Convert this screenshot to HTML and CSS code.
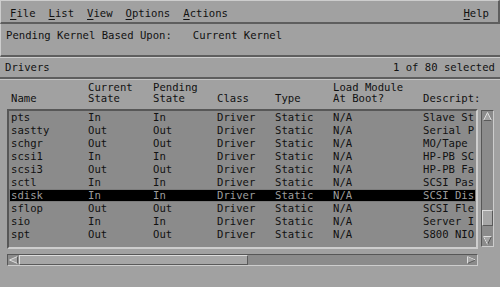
FILE: index.html
```html
<!DOCTYPE html>
<html lang="en">
<head>
  <meta charset="UTF-8">
  <title>Kernel Configuration: Drivers</title>
  <link rel="stylesheet" href="styles.css">
</head>
<body>
  <div class="window">
    <!-- Menu bar -->
    <div class="menubar">
      <span class="menu"><u>F</u>ile</span>
      <span class="menu"><u>L</u>ist</span>
      <span class="menu"><u>V</u>iew</span>
      <span class="menu"><u>O</u>ptions</span>
      <span class="menu"><u>A</u>ctions</span>
      <span class="menu help"><u>H</u>elp</span>
    </div>

    <!-- Kernel info -->
    <div class="kernel">
      <span>Pending Kernel Based Upon:</span><span class="kernel-value">Current Kernel</span>
    </div>

    <!-- List title -->
    <div class="titlebar">
      <span>Drivers</span>
      <span>1 of 80 selected</span>
    </div>

    <!-- Column headings -->
    <div class="heads cols">
      <span><br>Name</span>
      <span>Current<br>State</span>
      <span>Pending<br>State</span>
      <span><br>Class</span>
      <span><br>Type</span>
      <span>Load Module<br>At Boot?</span>
      <span><br>Descript:</span>
    </div>

    <div class="listarea">
      <div class="listbox">
        <div class="row cols"><span>pts</span><span>In</span><span>In</span><span>Driver</span><span>Static</span><span>N/A</span><span class="desc">Slave St</span></div>
        <div class="row cols"><span>sastty</span><span>Out</span><span>Out</span><span>Driver</span><span>Static</span><span>N/A</span><span class="desc">Serial P</span></div>
        <div class="row cols"><span>schgr</span><span>Out</span><span>Out</span><span>Driver</span><span>Static</span><span>N/A</span><span class="desc">MO/Tape</span></div>
        <div class="row cols"><span>scsi1</span><span>In</span><span>In</span><span>Driver</span><span>Static</span><span>N/A</span><span class="desc">HP-PB SC</span></div>
        <div class="row cols"><span>scsi3</span><span>Out</span><span>Out</span><span>Driver</span><span>Static</span><span>N/A</span><span class="desc">HP-PB Fa</span></div>
        <div class="row cols"><span>sctl</span><span>In</span><span>In</span><span>Driver</span><span>Static</span><span>N/A</span><span class="desc">SCSI Pas</span></div>
        <div class="row cols selected"><span>sdisk</span><span>In</span><span>In</span><span>Driver</span><span>Static</span><span>N/A</span><span class="desc">SCSI Dis</span></div>
        <div class="row cols"><span>sflop</span><span>Out</span><span>Out</span><span>Driver</span><span>Static</span><span>N/A</span><span class="desc">SCSI Fle</span></div>
        <div class="row cols"><span>sio</span><span>In</span><span>In</span><span>Driver</span><span>Static</span><span>N/A</span><span class="desc">Server I</span></div>
        <div class="row cols"><span>spt</span><span>Out</span><span>Out</span><span>Driver</span><span>Static</span><span>N/A</span><span class="desc">S800 NIO</span></div>
      </div>

      <!-- Vertical scrollbar -->
      <div class="vscroll">
        <svg class="arrow" width="11" height="11" viewBox="0 0 11 11">
          <polyline points="1.5,9.5 5.5,1.5 9.5,9.5" fill="#a3a3a3" stroke="#dedede"/>
          <line x1="1.5" y1="9.5" x2="9.5" y2="9.5" stroke="#5a5a5a"/>
        </svg>
        <div class="vthumb"></div>
        <svg class="arrow down" width="11" height="11" viewBox="0 0 11 11">
          <polygon points="1.5,1.5 9.5,1.5 5.5,9.5" fill="#a3a3a3" stroke="#5a5a5a"/>
          <polyline points="1.5,1.5 9.5,1.5" stroke="#dedede"/>
          <polyline points="1.5,1.5 5.5,9.5" stroke="#dedede"/>
        </svg>
      </div>
    </div>

    <!-- Horizontal scrollbar -->
    <div class="hscroll">
      <svg class="arrow" width="11" height="10" viewBox="0 0 11 10">
        <polygon points="9.5,1.5 9.5,8.5 1.5,5" fill="#a3a3a3" stroke="#dedede"/>
        <line x1="9.5" y1="1.5" x2="9.5" y2="8.5" stroke="#5a5a5a"/>
      </svg>
      <div class="hthumb"></div>
      <svg class="arrow right" width="11" height="10" viewBox="0 0 11 10">
        <polygon points="1.5,1.5 1.5,8.5 9.5,5" fill="#a3a3a3" stroke="#5a5a5a"/>
        <line x1="1.5" y1="1.5" x2="1.5" y2="8.5" stroke="#dedede"/>
        <line x1="1.5" y1="1.5" x2="9.5" y2="5" stroke="#dedede"/>
      </svg>
    </div>
  </div>
</body>
</html>
```

FILE: styles.css
```css
body {
  margin: 0;
  background-color: #a1a1a1;
  font-family: "DejaVu Sans Mono", "Liberation Mono", monospace;
  font-size: 10.6px;
  color: #111;
}

.window {
  width: 500px;
  height: 287px;
  overflow: hidden;
}

/* menu bar */
.menubar {
  display: flex;
  gap: 13px;
  height: 24px;
  box-sizing: border-box;
  padding: 5px 9px 0 9px;
  line-height: 14px;
  border-top: 1px solid #cdcdcd;
  border-left: 1px solid #cdcdcd;
  border-right: 2px solid #5e5e5e;
  border-bottom: 2px solid #5e5e5e;
}

.menu u {
  text-decoration-thickness: 1px;
  text-underline-offset: 2px;
}

.help {
  margin-left: auto;
}

/* kernel line */
.kernel {
  height: 33px;
  box-sizing: border-box;
  padding: 4px 5px 0 5px;
  line-height: 14px;
  border-left: 1px solid #cdcdcd;
  border-bottom: 2px solid #5e5e5e;
}

.kernel-value {
  margin-left: 21px;
}

/* list title */
.titlebar {
  display: flex;
  justify-content: space-between;
  height: 22px;
  box-sizing: border-box;
  padding: 2px 5px 0 5px;
  line-height: 14px;
  border-top: 1px solid #cdcdcd;
  border-bottom: 2px solid #5e5e5e;
}

/* columns shared by headings and rows */
.cols {
  display: grid;
  grid-template-columns: 77px 65px 64px 58px 58px 90px 1fr;
  white-space: nowrap;
}

.heads {
  height: 30px;
  box-sizing: border-box;
  padding: 2px 0 0 11px;
  line-height: 11px;
  border-top: 1px solid #c4c4c4;
}

.listarea {
  display: flex;
  align-items: flex-start;
  gap: 3px;
  height: 140px;
  padding: 0 6px 0 7px;
}

.listbox {
  flex: 1;
  height: 140px;
  box-sizing: border-box;
  background-color: #8b8b8b;
  border: 2px solid;
  border-color: #575757 #cdcdcd #cdcdcd #575757;
  overflow: hidden;
}

.row {
  height: 13px;
  line-height: 13px;
  padding-left: 2px;
}

.row.selected {
  background-color: #000;
  color: #9c9c9c;
  box-shadow: inset 0 0 0 1px #7c7c7c;
}

/* scrollbars */
.vscroll {
  display: flex;
  flex-direction: column;
  width: 13px;
  height: 137px;
  margin-top: 1px;
  box-sizing: border-box;
  background-color: #8b8b8b;
  border: 1px solid;
  border-color: #575757 #cdcdcd #cdcdcd #575757;
}

.vthumb {
  height: 16px;
  margin-top: 88px;
  box-sizing: border-box;
  background-color: #a6a6a6;
  border: 1px solid;
  border-color: #dcdcdc #5a5a5a #5a5a5a #dcdcdc;
}

.arrow {
  display: block;
  flex: none;
}

.arrow.down {
  margin-top: auto;
}

.hscroll {
  display: flex;
  align-items: center;
  width: 471px;
  height: 12px;
  margin: 5px 0 0 7px;
  box-sizing: border-box;
  background-color: #8b8b8b;
  border: 1px solid;
  border-color: #575757 #cdcdcd #cdcdcd #575757;
}

.hthumb {
  width: 229px;
  height: 10px;
  box-sizing: border-box;
  background-color: #a6a6a6;
  border: 1px solid;
  border-color: #dcdcdc #5a5a5a #5a5a5a #dcdcdc;
}

.arrow.right {
  margin-left: auto;
}
```
